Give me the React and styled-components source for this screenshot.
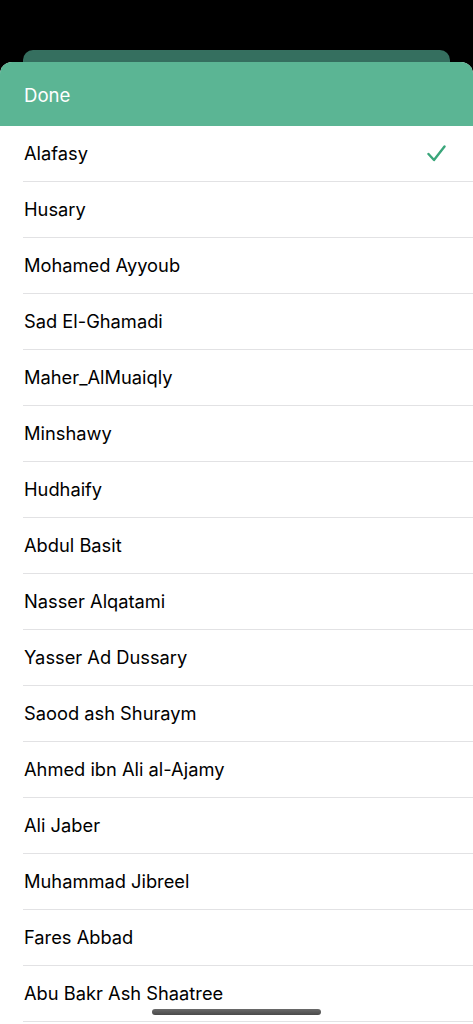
import React from "react";
import styled, { createGlobalStyle } from "styled-components";

const Global = createGlobalStyle`
  html, body { margin: 0; padding: 0; background: #000; }
  body { font-family: Inter, "Liberation Sans", sans-serif; -webkit-font-smoothing: antialiased; }
`;

const Screen = styled.div`
  position: relative;
  width: 473px;
  height: 1024px;
  overflow: hidden;
  background: #000;
  padding-top: 50px;
  box-sizing: border-box;
  display: flex;
  flex-direction: column;
`;

const BackCard = styled.div`
  height: 12px;
  margin: 0 23px;
  background: #356f5f;
  border-radius: 10px 10px 0 0;
  flex-shrink: 0;
`;

const Sheet = styled.div`
  flex: 1;
  background: #fff;
  border-radius: 12px 12px 0 0;
  overflow: hidden;
  display: flex;
  flex-direction: column;
`;

const Header = styled.div`
  height: 64px;
  background: #5bb594;
  display: flex;
  align-items: center;
  padding: 0 24px;
  flex-shrink: 0;
`;

const DoneButton = styled.button`
  border: none;
  background: none;
  padding: 0;
  color: #fff;
  font-family: inherit;
  font-size: 18.6px;
  margin-top: 1px;
  cursor: pointer;
`;

const List = styled.ul`
  list-style: none;
  margin: 0;
  padding: 0 0 0 23px;
`;

const Row = styled.li`
  height: 56px;
  box-sizing: border-box;
  border-bottom: 1px solid #e2e2e4;
  display: flex;
  align-items: center;
  justify-content: space-between;
  padding: 0 27px 0 1px;
`;

const Name = styled.span`
  font-size: 18.3px;
  color: #000;
  margin-top: -1px;
`;

const HomeIndicator = styled.div`
  position: absolute;
  left: 152px;
  bottom: 9px;
  width: 169px;
  height: 6px;
  border-radius: 3px;
  background: linear-gradient(#6a6a6a, #4a4a4a);
`;

const Check = () => (
  <svg width="19" height="17" viewBox="0 0 19 17" fill="none">
    <path d="M1.5 9 L7 15 L17.5 1.5" stroke="#3ba67b" strokeWidth="2.4" strokeLinecap="round" strokeLinejoin="round" />
  </svg>
);

const names = [
  "Alafasy",
  "Husary",
  "Mohamed Ayyoub",
  "Sad El-Ghamadi",
  "Maher_AlMuaiqly",
  "Minshawy",
  "Hudhaify",
  "Abdul Basit",
  "Nasser Alqatami",
  "Yasser Ad Dussary",
  "Saood ash Shuraym",
  "Ahmed ibn Ali al-Ajamy",
  "Ali Jaber",
  "Muhammad Jibreel",
  "Fares Abbad",
  "Abu Bakr Ash Shaatree",
];

export default function App() {
  return (
    <>
      <Global />
      <Screen>
        <BackCard />
        <Sheet>
          <Header>
            <DoneButton>Done</DoneButton>
          </Header>
          <List>
            {names.map((n, i) => (
              <Row key={n}>
                <Name>{n}</Name>
                {i === 0 && <Check />}
              </Row>
            ))}
          </List>
        </Sheet>
        <HomeIndicator />
      </Screen>
    </>
  );
}
